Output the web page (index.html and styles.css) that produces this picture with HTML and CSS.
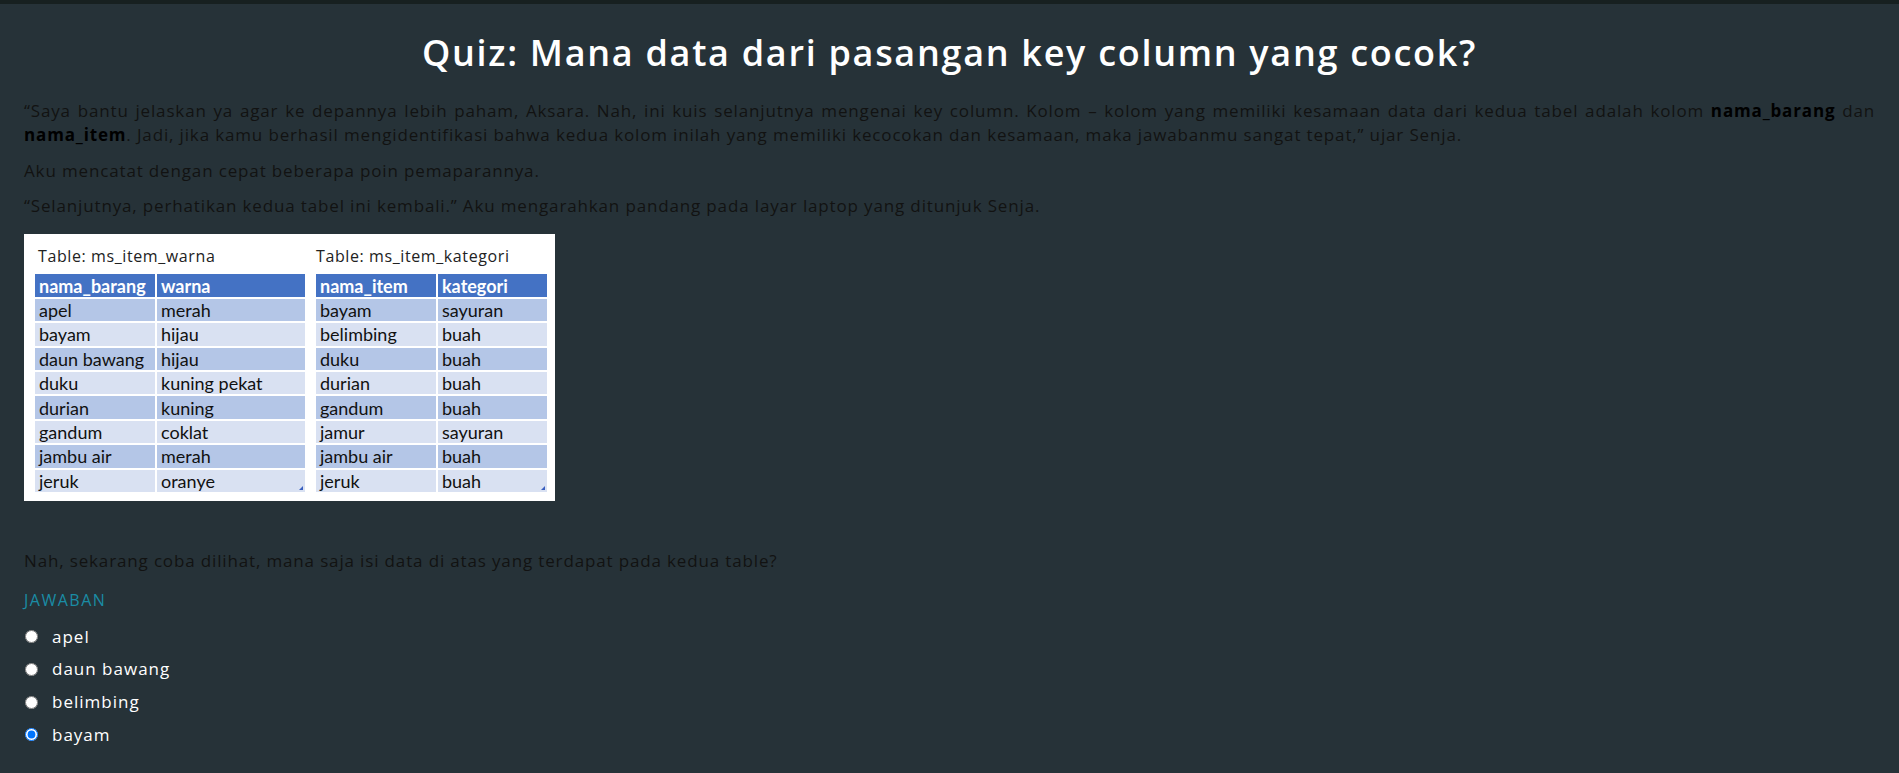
FILE: index.html
```html
<!DOCTYPE html>
<html lang="id">
<head>
<meta charset="utf-8">
<title>Quiz: Mana data dari pasangan key column yang cocok?</title>
<link rel="stylesheet" href="styles.css">
</head>
<body>
<div class="topbar"></div>
<main class="page">
  <h1 class="title">Quiz: Mana data dari pasangan key column yang cocok?</h1>
  <p class="text">“Saya bantu jelaskan ya agar ke depannya lebih paham, Aksara. Nah, ini kuis selanjutnya mengenai key column. Kolom – kolom yang memiliki kesamaan data dari kedua tabel adalah kolom <b>nama_barang</b> dan <b>nama_item</b>. Jadi, jika kamu berhasil mengidentifikasi bahwa kedua kolom inilah yang memiliki kecocokan dan kesamaan, maka jawabanmu sangat tepat,” ujar Senja.</p>
  <p class="text">Aku mencatat dengan cepat beberapa poin pemaparannya.</p>
  <p class="text">“Selanjutnya, perhatikan kedua tabel ini kembali.” Aku mengarahkan pandang pada layar laptop yang ditunjuk Senja.</p>

  <figure class="shot">
    <div class="tbl-block">
      <div class="tbl-title">Table: ms_item_warna</div>
      <table class="tbl tbl-left">
        <tr><th class="c1">nama_barang</th><th>warna</th></tr>
        <tr class="odd"><td>apel</td><td>merah</td></tr>
        <tr class="even"><td>bayam</td><td>hijau</td></tr>
        <tr class="odd"><td>daun bawang</td><td>hijau</td></tr>
        <tr class="even"><td>duku</td><td>kuning pekat</td></tr>
        <tr class="odd"><td>durian</td><td>kuning</td></tr>
        <tr class="even"><td>gandum</td><td>coklat</td></tr>
        <tr class="odd"><td>jambu air</td><td>merah</td></tr>
        <tr class="even"><td>jeruk</td><td class="corner">oranye</td></tr>
      </table>
    </div>
    <div class="tbl-block">
      <div class="tbl-title tbl-title-right">Table: ms_item_kategori</div>
      <table class="tbl tbl-right">
        <tr><th class="c1">nama_item</th><th>kategori</th></tr>
        <tr class="odd"><td>bayam</td><td>sayuran</td></tr>
        <tr class="even"><td>belimbing</td><td>buah</td></tr>
        <tr class="odd"><td>duku</td><td>buah</td></tr>
        <tr class="even"><td>durian</td><td>buah</td></tr>
        <tr class="odd"><td>gandum</td><td>buah</td></tr>
        <tr class="even"><td>jamur</td><td>sayuran</td></tr>
        <tr class="odd"><td>jambu air</td><td>buah</td></tr>
        <tr class="even"><td>jeruk</td><td class="corner">buah</td></tr>
      </table>
    </div>
  </figure>

  <p class="text question">Nah, sekarang coba dilihat, mana saja isi data di atas yang terdapat pada kedua table?</p>
  <div class="answer-label">JAWABAN</div>
  <div class="options">
    <label class="option"><input type="radio" name="jawab" value="apel"><span>apel</span></label>
    <label class="option"><input type="radio" name="jawab" value="daun bawang"><span>daun bawang</span></label>
    <label class="option"><input type="radio" name="jawab" value="belimbing"><span>belimbing</span></label>
    <label class="option"><input type="radio" name="jawab" value="bayam" checked><span>bayam</span></label>
  </div>
</main>
</body>
</html>
```

FILE: styles.css
```css
html, body {
  margin: 0;
  padding: 0;
}

body {
  background: #263238;
  font-family: "Open Sans", "Noto Sans", sans-serif;
  overflow: hidden;
}

.topbar {
  height: 4px;
  background: #172020;
}

.page {
  padding: 0 24px;
}

.title {
  margin: 28.4px 0 25px;
  font-size: 36px;
  font-weight: 600;
  line-height: 42px;
  letter-spacing: 1.7px;
  color: #ffffff;
  text-align: center;
}

.text {
  margin: 0 0 11.5px;
  font-size: 17px;
  line-height: 24px;
  letter-spacing: 0.85px;
  color: #121212;
  text-align: justify;
}

.text b {
  color: #000;
  font-weight: 700;
}

.shot {
  display: flex;
  gap: 7px;
  box-sizing: border-box;
  width: 531px;
  height: 267px;
  margin: 16px 0 48px;
  padding: 12px 6px 0 9px;
  background: #ffffff;
}

.tbl-block {
  display: flex;
  flex-direction: column;
}

.tbl-title {
  margin: 0 0 6px;
  padding-left: 5px;
  font-family: "Open Sans", sans-serif;
  font-size: 16px;
  line-height: 20px;
  letter-spacing: 0.6px;
  color: #222;
}

.tbl-title-right {
  padding-left: 2px;
}

.tbl {
  table-layout: fixed;
  border-collapse: separate;
  border-spacing: 2px;
  font-family: Lato, "Liberation Sans", sans-serif;
  font-size: 18px;
  color: #111;
}

.tbl-left {
  width: 274px;
}

.tbl-right {
  width: 235px;
}

.tbl .c1 {
  width: 120px;
}

.tbl th,
.tbl td {
  box-sizing: border-box;
  height: 22.4px;
  padding: 1px 4px 0;
  line-height: 21px;
  text-align: left;
  white-space: nowrap;
  vertical-align: middle;
}

.tbl th {
  background: #4472c4;
  color: #ffffff;
  font-weight: 700;
}

.tbl .odd td {
  background: #b4c6e7;
}

.tbl .even td {
  background: #d9e1f2;
}

.tbl .corner {
  position: relative;
}

.tbl .corner::after {
  content: "";
  position: absolute;
  right: 2px;
  bottom: 2px;
  width: 4px;
  height: 4px;
  background: #3a5fbf;
  clip-path: polygon(100% 0, 100% 100%, 0 100%);
}

.question {
  margin-bottom: 15px;
}

.answer-label {
  margin: 15px 0 12.4px;
  font-size: 16px;
  line-height: 24px;
  letter-spacing: 1.5px;
  color: #1a8ca5;
}

.options {
  display: flex;
  flex-direction: column;
  gap: 8.7px;
}

.option {
  display: flex;
  align-items: center;
  gap: 14px;
  height: 24px;
  font-size: 17px;
  line-height: 24px;
  letter-spacing: 1px;
  color: #ffffff;
}

.option input {
  width: 13px;
  height: 13px;
  margin: 0 0 0 1px;
}
```
